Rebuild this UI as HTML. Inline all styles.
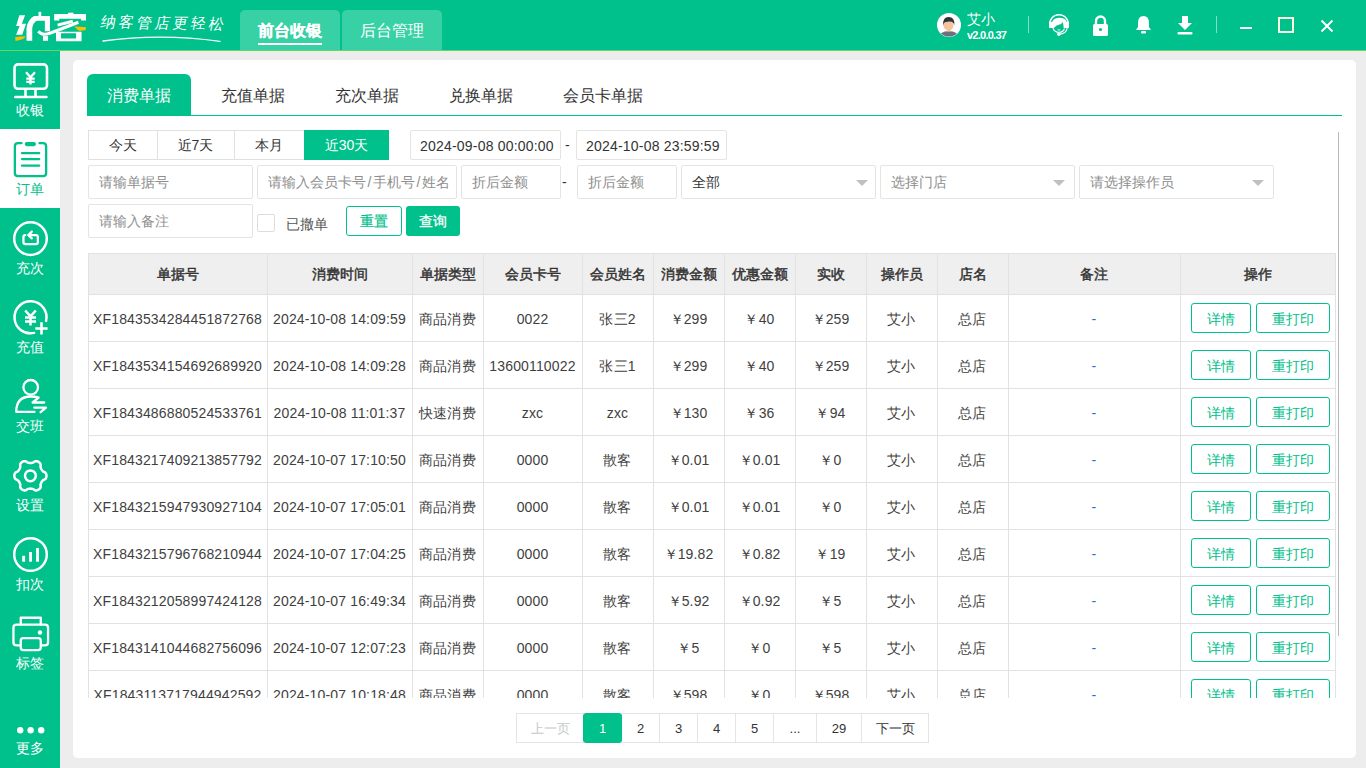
<!DOCTYPE html>
<html><head><meta charset="utf-8"><style>
*{margin:0;padding:0;box-sizing:border-box}
html,body{width:1366px;height:768px;overflow:hidden;background:#ededed;font-family:"Liberation Sans",sans-serif;color:#333}
.a{position:absolute}
.th{position:absolute;text-align:center;font-size:14px;font-weight:500;-webkit-text-stroke:0.45px #333;color:#333;white-space:nowrap}
.td{position:absolute;text-align:center;font-size:14px;color:#3f3f3f;white-space:nowrap;height:47px;letter-spacing:0.15px}
.rm{color:#1a73d9}
.hl{position:absolute;height:1px;background:#e2e2e2}
.vl{position:absolute;width:1px;background:#e2e2e2}
.obtn{position:absolute;height:30px;border:1px solid #00c08b;border-radius:3px;color:#00c08b;font-size:14px;text-align:center;line-height:30px;background:#fff}
.sbt{position:absolute;left:0;width:60px;text-align:center;font-size:14px;line-height:16px}
.inp{position:absolute;height:34px;border:1px solid #e4e4e4;border-radius:2px;font-size:14px;color:#8e8e8e;line-height:32px;padding-left:10px;background:#fff;white-space:nowrap}
.tri{position:absolute;width:0;height:0;border-left:6px solid transparent;border-right:6px solid transparent;border-top:6px solid #c0c0c0}
.pg{position:absolute;top:713px;height:30px;border:1px solid #e4e4e4;font-size:13px;text-align:center;line-height:29px;color:#333;background:#fff}
</style></head><body>
<!-- header -->
<div class="a" style="left:0;top:0;width:1366px;height:50px;background:#00c08b"></div>
<div class="a" style="left:0;top:50px;width:1366px;height:1px;background:#62d862"></div>
<svg class="a" style="left:10px;top:8px" width="85" height="38" viewBox="0 0 1366 611">
<path d="M150 115H242L190 252H258L196 432H98L154 288H98Z" fill="#fff"/>
<path d="M385 128H642V372H560V205H430Q368 235 357 330V528H265V330Q280 190 385 128Z" fill="#fff"/>
<rect x="458" y="62" width="44" height="70" fill="#fff"/>
<rect x="530" y="452" width="82" height="75" fill="#fff"/>
<path d="M710 98H1222V202H1140V172H792V202H710Z" fill="#fff"/>
<rect x="935" y="75" width="85" height="30" fill="#fff"/>
<path d="M765 275L1010 212" stroke="#fff" stroke-width="48" fill="none"/>
<path d="M1100 228Q840 330 640 405Q520 450 455 372" stroke="#fff" stroke-width="50" fill="none"/>
<path d="M740 380H1150V535H740ZM820 405V490H1062V405Z" fill="#fff" fill-rule="evenodd"/>
<path d="M82 470Q160 455 245 455Q240 492 200 502Q140 520 88 532Z" fill="#fbbf00"/>
<path d="M1030 296Q1120 300 1222 310L1216 352Q1150 372 1100 362Z" fill="#fbbf00"/>
</svg>
<div class="a" style="left:101px;top:13px;font-size:15px;color:#fff;letter-spacing:3px;line-height:20px;font-weight:200;transform:skewX(-10deg) rotate(1deg);white-space:nowrap">纳客管店更轻松</div>
<svg class="a" style="left:100px;top:33px" width="124" height="10" viewBox="0 0 124 10"><path d="M3 8Q60 0 120 8.3" stroke="#fff" stroke-width="1.3" fill="none" stroke-linecap="round"/></svg>
<div class="a" style="left:240px;top:10px;width:100px;height:40px;background:#37d1a5;border-radius:5px 5px 0 0"></div>
<div class="a" style="left:342px;top:10px;width:100px;height:40px;background:#37d1a5;border-radius:5px 5px 0 0"></div>
<div class="a" style="left:240px;top:20px;width:100px;text-align:center;font-size:16px;font-weight:bold;color:#fff;line-height:22px;-webkit-text-stroke:0.3px #fff">前台收银</div>
<div class="a" style="left:258px;top:43px;width:64px;height:2px;background:#fff"></div>
<div class="a" style="left:342px;top:20px;width:100px;text-align:center;font-size:16px;color:#fff;line-height:22px">后台管理</div>
<!-- user -->
<svg class="a" style="left:937px;top:13px" width="24" height="24" viewBox="0 0 24 24"><circle cx="12" cy="12" r="12" fill="#fff"/><clipPath id="cc"><circle cx="12" cy="12" r="11.5"/></clipPath><g clip-path="url(#cc)"><path d="M2 24Q3 18.4 11.8 18.1Q20.6 18.4 21.6 24Z" fill="#6d7080"/><rect x="9.9" y="15" width="3.9" height="3.6" fill="#f4c59c"/><ellipse cx="11.5" cy="12.7" rx="5" ry="4.7" fill="#f4c59c"/><path d="M6.1 12.8Q5.4 4 11.6 4Q17.9 4 17.3 12.2Q16.8 9.2 14.5 8.7Q11 8.3 8 9.3Q6.6 10.2 6.1 12.8Z" fill="#333"/></g></svg>
<div class="a" style="left:967px;top:11px;font-size:14px;color:#fff;line-height:16px">艾小</div>
<div class="a" style="left:967px;top:29px;font-size:11px;font-weight:bold;color:#fff;line-height:13px;letter-spacing:-0.75px">v2.0.0.37</div>
<div class="a" style="left:1028px;top:16px;width:1px;height:17px;background:rgba(255,255,255,0.5)"></div>
<svg class="a" style="left:1044px;top:10px" width="30" height="30" viewBox="0 0 30 30"><path d="M5.9 16A9.3 9.3 0 1 1 24.1 16" stroke="#fff" stroke-width="1.5" fill="none"/><rect x="5" y="11.7" width="4.6" height="6.4" rx="1.2" fill="#fff"/><rect x="21" y="11.7" width="4" height="6.4" rx="1.2" fill="#fff"/><path d="M7.8 18V15Q7.8 7.8 15.5 7.8Q23.2 7.8 23.2 15V18Z" fill="#fff"/><path d="M10 17.8Q12.5 14.6 17.3 13.9Q17.9 12 18.6 12.2Q19.6 14 19.6 17V18.5Q19 21.3 15 21.3Q11 21.3 10 17.8Z" fill="#00c08b"/><path d="M9 18.2Q10.5 22.3 15 22.3Q19.3 22.3 20.5 18.5" stroke="#fff" stroke-width="1.1" fill="none"/><path d="M13.6 19.8Q15 20.4 16.4 19.8" stroke="#fff" stroke-width="0.9" fill="none"/><path d="M23.2 18Q22.5 23.4 15.5 24.3" stroke="#fff" stroke-width="1.2" fill="none"/><circle cx="14.8" cy="24.3" r="1.7" fill="#fff"/></svg>
<svg class="a" style="left:1092px;top:15px" width="17" height="21" viewBox="0 0 17 21"><path d="M4 9V6A4.5 4.5 0 0 1 13 6V9" stroke="#fff" stroke-width="2.4" fill="none"/><rect x="1" y="9" width="15" height="12" rx="1.5" fill="#fff"/><circle cx="8.5" cy="14.5" r="1.6" fill="#00c08b"/></svg>
<svg class="a" style="left:1135px;top:15px" width="17" height="19" viewBox="0 0 17 19"><path d="M8.5 1Q3 1 3 8V12L1 15H16L14 12V8Q14 1 8.5 1Z" fill="#fff"/><rect x="6" y="16" width="5" height="2.5" rx="1" fill="#fff"/></svg>
<svg class="a" style="left:1177px;top:15px" width="16" height="20" viewBox="0 0 16 20"><path d="M5 1H11V8H15L8 15L1 8H5Z" fill="#fff"/><rect x="0.5" y="17" width="15" height="2.5" rx="1" fill="#fff"/></svg>
<div class="a" style="left:1216px;top:16px;width:1px;height:17px;background:rgba(255,255,255,0.5)"></div>
<div class="a" style="left:1240px;top:27px;width:12px;height:2px;background:#fff"></div>
<div class="a" style="left:1278px;top:17px;width:16px;height:16px;border:2px solid #fffbe0"></div>
<svg class="a" style="left:1320px;top:19px" width="14" height="14" viewBox="0 0 14 14"><path d="M1.5 1.5L12.5 12.5M12.5 1.5L1.5 12.5" stroke="#fff" stroke-width="2"/></svg>
<!-- sidebar -->
<div class="a" style="left:0;top:51px;width:60px;height:717px;background:#00c08b"></div>
<div style="position:absolute;left:0;top:50px;width:60px;height:79px"><svg style="display:block" width="60" height="79" viewBox="0 0 60 79"><rect x="14.5" y="14.4" width="32.5" height="24.4" rx="3.5" stroke="#fff" stroke-width="2.6" fill="none" stroke-linecap="round" stroke-linejoin="round"/><path d="M15.2 47H46.5" stroke="#fff" stroke-width="2.4" fill="none" stroke-linecap="round" stroke-linejoin="round"/><path d="M25.5 39.5V46M35.5 39.5V46" stroke="#fff" stroke-width="2.6" fill="none"/><path d="M26 22.3L30.5 27.3L35 22.3M30.5 27.3V34.6M26.3 28.6H34.7M26.3 31.9H34.7" stroke="#fff" stroke-width="2.3" fill="none"/></svg></div>
<div class="sbt" style="top:102px;color:#fff">收银</div>
<div style="position:absolute;left:0;top:129px;width:60px;height:79px;background:#fff"></div>
<div style="position:absolute;left:0;top:129px;width:60px;height:79px"><svg style="display:block" width="60" height="79" viewBox="0 0 60 79"><path d="M21.5 14.2H18Q14.85 14.2 14.85 17.5V44Q14.85 47.15 18 47.15H43Q46.15 47.15 46.15 44V17.5Q46.15 14.2 43 14.2H39.5" stroke="#00c08b" stroke-width="2.3" fill="none" stroke-linecap="round" stroke-linejoin="round"/><rect x="24.7" y="13" width="11.3" height="4.2" rx="2.1" fill="#00c08b"/><path d="M22 24.2H39.2M22 30.1H39.2M22 36.7H39.2" stroke="#00c08b" stroke-width="2.3" fill="none" stroke-linecap="round" stroke-linejoin="round"/></svg></div>
<div class="sbt" style="top:181px;color:#00c08b">订单</div>
<div style="position:absolute;left:0;top:208px;width:60px;height:79px"><svg style="display:block" width="60" height="79" viewBox="0 0 60 79"><circle cx="30.5" cy="30.6" r="16.3" stroke="#fff" stroke-width="2.5" fill="none" stroke-linecap="round" stroke-linejoin="round"/><path d="M28.5 27.05H35.85Q37.85 27.05 37.85 29V34Q37.85 36.05 35.85 36.05H25.45Q23.45 36.05 23.45 34V29Q23.45 27.05 25.2 27.05" stroke="#fff" stroke-width="2.3" fill="none" stroke-linecap="round" stroke-linejoin="round"/><path d="M31.8 23.6L28.4 27.1L31.8 30.4" stroke="#fff" stroke-width="2.3" fill="none" stroke-linecap="round" stroke-linejoin="round"/></svg></div>
<div class="sbt" style="top:260px;color:#fff">充次</div>
<div style="position:absolute;left:0;top:287px;width:60px;height:79px"><svg style="display:block" width="60" height="79" viewBox="0 0 60 79"><path d="M46.1 33.9A16 16 0 1 0 34.1 45.9" stroke="#fff" stroke-width="2.5" fill="none" stroke-linecap="round" stroke-linejoin="round"/><path d="M25.2 23.5L30.5 29.3L35.8 23.5M30.5 29.3V38.6M25 30.6H36M25 34.6H36" stroke="#fff" stroke-width="2.5" fill="none"/><path d="M41.5 35.3V47.6M35.3 41.5H47.6" stroke="#fff" stroke-width="2.6" fill="none"/></svg></div>
<div class="sbt" style="top:339px;color:#fff">充值</div>
<div style="position:absolute;left:0;top:366px;width:60px;height:79px"><svg style="display:block" width="60" height="79" viewBox="0 0 60 79"><circle cx="30.7" cy="21.3" r="7.3" stroke="#fff" stroke-width="2.3" fill="none" stroke-linecap="round" stroke-linejoin="round"/><path d="M34.5 45.8H16.2Q16.5 30.5 30.5 30.5Q36 30.5 38.6 31.6L32.6 36.5H44.2M34.3 41.6H46L40.6 46.2" stroke="#fff" stroke-width="2.3" fill="none" stroke-linecap="round" stroke-linejoin="round"/></svg></div>
<div class="sbt" style="top:418px;color:#fff">交班</div>
<div style="position:absolute;left:0;top:445px;width:60px;height:79px"><svg style="display:block" width="60" height="79" viewBox="0 0 60 79"><path d="M46.50 30.80 L46.43 31.64 L46.23 32.46 L45.89 33.25 L45.38 33.98 L44.36 34.54 L43.32 35.00 L42.74 35.54 L42.26 36.08 L41.84 36.63 L41.49 37.20 L41.17 37.80 L40.90 38.43 L40.67 39.12 L40.50 39.89 L40.62 41.02 L40.65 42.18 L40.27 42.99 L39.76 43.68 L39.14 44.26 L38.45 44.74 L37.69 45.11 L36.87 45.34 L36.02 45.44 L35.13 45.37 L34.14 44.76 L33.22 44.09 L32.47 43.86 L31.76 43.71 L31.07 43.63 L30.40 43.60 L29.73 43.63 L29.04 43.71 L28.33 43.86 L27.58 44.09 L26.66 44.76 L25.67 45.37 L24.78 45.44 L23.93 45.34 L23.11 45.11 L22.35 44.74 L21.66 44.26 L21.04 43.68 L20.53 42.99 L20.15 42.18 L20.18 41.02 L20.30 39.89 L20.13 39.12 L19.90 38.43 L19.63 37.80 L19.31 37.20 L18.96 36.63 L18.54 36.08 L18.06 35.54 L17.48 35.00 L16.44 34.54 L15.42 33.98 L14.91 33.25 L14.57 32.46 L14.37 31.64 L14.30 30.80 L14.37 29.96 L14.57 29.14 L14.91 28.35 L15.42 27.62 L16.44 27.06 L17.48 26.60 L18.06 26.06 L18.54 25.52 L18.96 24.97 L19.31 24.40 L19.63 23.80 L19.90 23.17 L20.13 22.48 L20.30 21.71 L20.18 20.58 L20.15 19.42 L20.53 18.61 L21.04 17.92 L21.66 17.34 L22.35 16.86 L23.11 16.49 L23.93 16.26 L24.78 16.16 L25.67 16.23 L26.66 16.84 L27.58 17.51 L28.33 17.74 L29.04 17.89 L29.73 17.97 L30.40 18.00 L31.07 17.97 L31.76 17.89 L32.47 17.74 L33.22 17.51 L34.14 16.84 L35.13 16.23 L36.02 16.16 L36.87 16.26 L37.69 16.49 L38.45 16.86 L39.14 17.34 L39.76 17.92 L40.27 18.61 L40.65 19.42 L40.62 20.58 L40.50 21.71 L40.67 22.48 L40.90 23.17 L41.17 23.80 L41.49 24.40 L41.84 24.97 L42.26 25.52 L42.74 26.06 L43.32 26.60 L44.36 27.06 L45.38 27.62 L45.89 28.35 L46.23 29.14 L46.43 29.96Z" stroke="#fff" stroke-width="2.5" fill="none" stroke-linecap="round" stroke-linejoin="round"/><circle cx="30.4" cy="30.8" r="5.4" stroke="#fff" stroke-width="2.5" fill="none" stroke-linecap="round" stroke-linejoin="round"/></svg></div>
<div class="sbt" style="top:497px;color:#fff">设置</div>
<div style="position:absolute;left:0;top:524px;width:60px;height:79px"><svg style="display:block" width="60" height="79" viewBox="0 0 60 79"><circle cx="30.5" cy="30.5" r="16.3" stroke="#fff" stroke-width="2.5" fill="none" stroke-linecap="round" stroke-linejoin="round"/><rect x="22.2" y="31.8" width="2.9" height="5.9" fill="#fff"/><rect x="29.1" y="28" width="2.9" height="9.7" fill="#fff"/><rect x="36.1" y="24" width="2.9" height="13.7" fill="#fff"/></svg></div>
<div class="sbt" style="top:576px;color:#fff">扣次</div>
<div style="position:absolute;left:0;top:603px;width:60px;height:79px"><svg style="display:block" width="60" height="79" viewBox="0 0 60 79"><path d="M20.75 21.55V14.75H40.75V21.55" stroke="#fff" stroke-width="2.3" fill="none" stroke-linecap="round" stroke-linejoin="round"/><path d="M19.8 42.45H16.5Q13.45 42.45 13.45 39.5V24.5Q13.45 21.55 16.5 21.55H45Q48.05 21.55 48.05 24.5V39.5Q48.05 42.45 45 42.45H41.7" stroke="#fff" stroke-width="2.3" fill="none" stroke-linecap="round" stroke-linejoin="round"/><rect x="20.75" y="35.15" width="20" height="11.9" rx="2.5" stroke="#fff" stroke-width="2.3" fill="none" stroke-linecap="round" stroke-linejoin="round"/><circle cx="40" cy="29.5" r="2.2" fill="#fff"/></svg></div>
<div class="sbt" style="top:655px;color:#fff">标签</div>
<div style="position:absolute;left:17px;top:727px;width:28px;height:7px"><svg style="display:block" width="28" height="7"><circle cx="3.2" cy="3.3" r="3.2" fill="#fff"/><circle cx="13.6" cy="3.3" r="3.2" fill="#fff"/><circle cx="24.2" cy="3.3" r="3.2" fill="#fff"/></svg></div>
<div class="sbt" style="top:740px;color:#fff">更多</div>
<!-- card -->
<div class="a" style="left:73px;top:60px;width:1283px;height:698px;background:#fff;border-radius:5px"></div>
<!-- tabs -->
<div class="a" style="left:87px;top:74px;width:104px;height:41px;background:#00c08b;border-radius:6px 6px 0 0"></div>
<div class="a" style="left:87px;top:115px;width:1255px;height:1px;background:#00c08b"></div>
<div class="a" style="left:87px;top:86px;width:104px;text-align:center;font-size:16px;color:#fff;line-height:20px">消费单据</div>
<div class="a" style="left:221px;top:86px;font-size:16px;color:#333;line-height:20px">充值单据</div>
<div class="a" style="left:335px;top:86px;font-size:16px;color:#333;line-height:20px">充次单据</div>
<div class="a" style="left:449px;top:86px;font-size:16px;color:#333;line-height:20px">兑换单据</div>
<div class="a" style="left:563px;top:86px;font-size:16px;color:#333;line-height:20px">会员卡单据</div>
<!-- scroll border line -->
<div class="a" style="left:1338px;top:132px;width:1px;height:504px;background:#b8b8b8"></div>
<!-- date buttons -->
<div class="a" style="left:88px;top:130px;width:301px;height:30px;border:1px solid #e0e0e0;background:#fff"></div>
<div class="a" style="left:157px;top:130px;width:1px;height:30px;background:#e0e0e0"></div>
<div class="a" style="left:234px;top:130px;width:1px;height:30px;background:#e0e0e0"></div>
<div class="a" style="left:304px;top:130px;width:85px;height:30px;background:#00c08b"></div>
<div class="a" style="left:88px;top:137px;width:69px;text-align:center;font-size:14px;line-height:16px">今天</div>
<div class="a" style="left:157px;top:137px;width:77px;text-align:center;font-size:14px;line-height:16px">近7天</div>
<div class="a" style="left:234px;top:137px;width:70px;text-align:center;font-size:14px;line-height:16px">本月</div>
<div class="a" style="left:304px;top:137px;width:85px;text-align:center;font-size:14px;line-height:16px;color:#fff">近30天</div>
<div class="inp" style="left:410px;top:130px;width:151px;height:30px;line-height:30px;color:#333;padding-left:9px;letter-spacing:0.2px">2024-09-08 00:00:00</div>
<div class="a" style="left:565px;top:137px;font-size:14px;line-height:16px">-</div>
<div class="inp" style="left:576px;top:130px;width:151px;height:30px;line-height:30px;color:#333;padding-left:9px;letter-spacing:0.2px">2024-10-08 23:59:59</div>
<!-- row 1 inputs -->
<div class="inp" style="left:88px;top:165px;width:165px">请输单据号</div>
<div class="inp" style="left:257px;top:165px;width:200px">请输入会员卡号<span style="margin:0 1.5px">/</span>手机号<span style="margin:0 1.5px">/</span>姓名</div>
<div class="inp" style="left:461px;top:165px;width:100px">折后金额</div>
<div class="a" style="left:562px;top:174px;font-size:14px;line-height:16px">-</div>
<div class="inp" style="left:577px;top:165px;width:100px">折后金额</div>
<div class="inp" style="left:681px;top:165px;width:195px;color:#333">全部</div>
<div class="tri" style="left:856px;top:180px"></div>
<div class="inp" style="left:880px;top:165px;width:195px">选择门店</div>
<div class="tri" style="left:1053px;top:180px"></div>
<div class="inp" style="left:1079px;top:165px;width:195px">请选择操作员</div>
<div class="tri" style="left:1252px;top:180px"></div>
<!-- row 2 -->
<div class="inp" style="left:88px;top:204px;width:165px">请输入备注</div>
<div class="a" style="left:257px;top:214px;width:18px;height:18px;border:1px solid #dcdcdc;border-radius:2px;background:#fff"></div>
<div class="a" style="left:286px;top:216px;font-size:14px;line-height:16px;color:#555">已撤单</div>
<div class="a" style="left:346px;top:206px;width:56px;height:30px;border:1px solid #00c08b;border-radius:3px;color:#00c08b;text-align:center;font-size:14px;line-height:28px;-webkit-text-stroke:0.2px #00c08b">重置</div>
<div class="a" style="left:406px;top:206px;width:54px;height:30px;background:#00c08b;border-radius:3px;color:#fff;text-align:center;font-size:14px;line-height:30px;-webkit-text-stroke:0.3px #fff">查询</div>
<!-- table -->
<div class="a" style="left:88px;top:253px;width:1248px;height:445px;overflow:hidden">
<div class="a" style="left:-88px;top:-253px;width:1366px;height:768px">
<div style="position:absolute;left:88px;top:253px;width:1247px;height:41px;background:#efefef"></div>
<div class="th" style="left:88px;top:254px;width:179px;height:41px;line-height:41px">单据号</div>
<div class="th" style="left:267px;top:254px;width:145px;height:41px;line-height:41px">消费时间</div>
<div class="th" style="left:412px;top:254px;width:71px;height:41px;line-height:41px">单据类型</div>
<div class="th" style="left:483px;top:254px;width:99px;height:41px;line-height:41px">会员卡号</div>
<div class="th" style="left:582px;top:254px;width:71px;height:41px;line-height:41px">会员姓名</div>
<div class="th" style="left:653px;top:254px;width:71px;height:41px;line-height:41px">消费金额</div>
<div class="th" style="left:724px;top:254px;width:71px;height:41px;line-height:41px">优惠金额</div>
<div class="th" style="left:795px;top:254px;width:71px;height:41px;line-height:41px">实收</div>
<div class="th" style="left:866px;top:254px;width:71px;height:41px;line-height:41px">操作员</div>
<div class="th" style="left:937px;top:254px;width:71px;height:41px;line-height:41px">店名</div>
<div class="th" style="left:1008px;top:254px;width:172px;height:41px;line-height:41px">备注</div>
<div class="th" style="left:1180px;top:254px;width:155px;height:41px;line-height:41px">操作</div>
<div class="td" style="left:88px;top:296px;width:179px;line-height:47px">XF1843534284451872768</div>
<div class="td" style="left:267px;top:296px;width:145px;line-height:47px">2024-10-08 14:09:59</div>
<div class="td" style="left:412px;top:296px;width:71px;line-height:47px">商品消费</div>
<div class="td" style="left:483px;top:296px;width:99px;line-height:47px">0022</div>
<div class="td" style="left:582px;top:296px;width:71px;line-height:47px">张三2</div>
<div class="td" style="left:653px;top:296px;width:71px;line-height:47px">￥299</div>
<div class="td" style="left:724px;top:296px;width:71px;line-height:47px">￥40</div>
<div class="td" style="left:795px;top:296px;width:71px;line-height:47px">￥259</div>
<div class="td" style="left:866px;top:296px;width:71px;line-height:47px">艾小</div>
<div class="td" style="left:937px;top:296px;width:71px;line-height:47px">总店</div>
<div class="td rm" style="left:1008px;top:296px;width:172px;line-height:47px">-</div>
<div class="obtn" style="left:1191px;top:303px;width:60px">详情</div>
<div class="obtn" style="left:1256px;top:303px;width:74px">重打印</div>
<div class="td" style="left:88px;top:343px;width:179px;line-height:47px">XF1843534154692689920</div>
<div class="td" style="left:267px;top:343px;width:145px;line-height:47px">2024-10-08 14:09:28</div>
<div class="td" style="left:412px;top:343px;width:71px;line-height:47px">商品消费</div>
<div class="td" style="left:483px;top:343px;width:99px;line-height:47px">13600110022</div>
<div class="td" style="left:582px;top:343px;width:71px;line-height:47px">张三1</div>
<div class="td" style="left:653px;top:343px;width:71px;line-height:47px">￥299</div>
<div class="td" style="left:724px;top:343px;width:71px;line-height:47px">￥40</div>
<div class="td" style="left:795px;top:343px;width:71px;line-height:47px">￥259</div>
<div class="td" style="left:866px;top:343px;width:71px;line-height:47px">艾小</div>
<div class="td" style="left:937px;top:343px;width:71px;line-height:47px">总店</div>
<div class="td rm" style="left:1008px;top:343px;width:172px;line-height:47px">-</div>
<div class="obtn" style="left:1191px;top:350px;width:60px">详情</div>
<div class="obtn" style="left:1256px;top:350px;width:74px">重打印</div>
<div class="td" style="left:88px;top:390px;width:179px;line-height:47px">XF1843486880524533761</div>
<div class="td" style="left:267px;top:390px;width:145px;line-height:47px">2024-10-08 11:01:37</div>
<div class="td" style="left:412px;top:390px;width:71px;line-height:47px">快速消费</div>
<div class="td" style="left:483px;top:390px;width:99px;line-height:47px">zxc</div>
<div class="td" style="left:582px;top:390px;width:71px;line-height:47px">zxc</div>
<div class="td" style="left:653px;top:390px;width:71px;line-height:47px">￥130</div>
<div class="td" style="left:724px;top:390px;width:71px;line-height:47px">￥36</div>
<div class="td" style="left:795px;top:390px;width:71px;line-height:47px">￥94</div>
<div class="td" style="left:866px;top:390px;width:71px;line-height:47px">艾小</div>
<div class="td" style="left:937px;top:390px;width:71px;line-height:47px">总店</div>
<div class="td rm" style="left:1008px;top:390px;width:172px;line-height:47px">-</div>
<div class="obtn" style="left:1191px;top:397px;width:60px">详情</div>
<div class="obtn" style="left:1256px;top:397px;width:74px">重打印</div>
<div class="td" style="left:88px;top:437px;width:179px;line-height:47px">XF1843217409213857792</div>
<div class="td" style="left:267px;top:437px;width:145px;line-height:47px">2024-10-07 17:10:50</div>
<div class="td" style="left:412px;top:437px;width:71px;line-height:47px">商品消费</div>
<div class="td" style="left:483px;top:437px;width:99px;line-height:47px">0000</div>
<div class="td" style="left:582px;top:437px;width:71px;line-height:47px">散客</div>
<div class="td" style="left:653px;top:437px;width:71px;line-height:47px">￥0.01</div>
<div class="td" style="left:724px;top:437px;width:71px;line-height:47px">￥0.01</div>
<div class="td" style="left:795px;top:437px;width:71px;line-height:47px">￥0</div>
<div class="td" style="left:866px;top:437px;width:71px;line-height:47px">艾小</div>
<div class="td" style="left:937px;top:437px;width:71px;line-height:47px">总店</div>
<div class="td rm" style="left:1008px;top:437px;width:172px;line-height:47px">-</div>
<div class="obtn" style="left:1191px;top:444px;width:60px">详情</div>
<div class="obtn" style="left:1256px;top:444px;width:74px">重打印</div>
<div class="td" style="left:88px;top:484px;width:179px;line-height:47px">XF1843215947930927104</div>
<div class="td" style="left:267px;top:484px;width:145px;line-height:47px">2024-10-07 17:05:01</div>
<div class="td" style="left:412px;top:484px;width:71px;line-height:47px">商品消费</div>
<div class="td" style="left:483px;top:484px;width:99px;line-height:47px">0000</div>
<div class="td" style="left:582px;top:484px;width:71px;line-height:47px">散客</div>
<div class="td" style="left:653px;top:484px;width:71px;line-height:47px">￥0.01</div>
<div class="td" style="left:724px;top:484px;width:71px;line-height:47px">￥0.01</div>
<div class="td" style="left:795px;top:484px;width:71px;line-height:47px">￥0</div>
<div class="td" style="left:866px;top:484px;width:71px;line-height:47px">艾小</div>
<div class="td" style="left:937px;top:484px;width:71px;line-height:47px">总店</div>
<div class="td rm" style="left:1008px;top:484px;width:172px;line-height:47px">-</div>
<div class="obtn" style="left:1191px;top:491px;width:60px">详情</div>
<div class="obtn" style="left:1256px;top:491px;width:74px">重打印</div>
<div class="td" style="left:88px;top:531px;width:179px;line-height:47px">XF1843215796768210944</div>
<div class="td" style="left:267px;top:531px;width:145px;line-height:47px">2024-10-07 17:04:25</div>
<div class="td" style="left:412px;top:531px;width:71px;line-height:47px">商品消费</div>
<div class="td" style="left:483px;top:531px;width:99px;line-height:47px">0000</div>
<div class="td" style="left:582px;top:531px;width:71px;line-height:47px">散客</div>
<div class="td" style="left:653px;top:531px;width:71px;line-height:47px">￥19.82</div>
<div class="td" style="left:724px;top:531px;width:71px;line-height:47px">￥0.82</div>
<div class="td" style="left:795px;top:531px;width:71px;line-height:47px">￥19</div>
<div class="td" style="left:866px;top:531px;width:71px;line-height:47px">艾小</div>
<div class="td" style="left:937px;top:531px;width:71px;line-height:47px">总店</div>
<div class="td rm" style="left:1008px;top:531px;width:172px;line-height:47px">-</div>
<div class="obtn" style="left:1191px;top:538px;width:60px">详情</div>
<div class="obtn" style="left:1256px;top:538px;width:74px">重打印</div>
<div class="td" style="left:88px;top:578px;width:179px;line-height:47px">XF1843212058997424128</div>
<div class="td" style="left:267px;top:578px;width:145px;line-height:47px">2024-10-07 16:49:34</div>
<div class="td" style="left:412px;top:578px;width:71px;line-height:47px">商品消费</div>
<div class="td" style="left:483px;top:578px;width:99px;line-height:47px">0000</div>
<div class="td" style="left:582px;top:578px;width:71px;line-height:47px">散客</div>
<div class="td" style="left:653px;top:578px;width:71px;line-height:47px">￥5.92</div>
<div class="td" style="left:724px;top:578px;width:71px;line-height:47px">￥0.92</div>
<div class="td" style="left:795px;top:578px;width:71px;line-height:47px">￥5</div>
<div class="td" style="left:866px;top:578px;width:71px;line-height:47px">艾小</div>
<div class="td" style="left:937px;top:578px;width:71px;line-height:47px">总店</div>
<div class="td rm" style="left:1008px;top:578px;width:172px;line-height:47px">-</div>
<div class="obtn" style="left:1191px;top:585px;width:60px">详情</div>
<div class="obtn" style="left:1256px;top:585px;width:74px">重打印</div>
<div class="td" style="left:88px;top:625px;width:179px;line-height:47px">XF1843141044682756096</div>
<div class="td" style="left:267px;top:625px;width:145px;line-height:47px">2024-10-07 12:07:23</div>
<div class="td" style="left:412px;top:625px;width:71px;line-height:47px">商品消费</div>
<div class="td" style="left:483px;top:625px;width:99px;line-height:47px">0000</div>
<div class="td" style="left:582px;top:625px;width:71px;line-height:47px">散客</div>
<div class="td" style="left:653px;top:625px;width:71px;line-height:47px">￥5</div>
<div class="td" style="left:724px;top:625px;width:71px;line-height:47px">￥0</div>
<div class="td" style="left:795px;top:625px;width:71px;line-height:47px">￥5</div>
<div class="td" style="left:866px;top:625px;width:71px;line-height:47px">艾小</div>
<div class="td" style="left:937px;top:625px;width:71px;line-height:47px">总店</div>
<div class="td rm" style="left:1008px;top:625px;width:172px;line-height:47px">-</div>
<div class="obtn" style="left:1191px;top:632px;width:60px">详情</div>
<div class="obtn" style="left:1256px;top:632px;width:74px">重打印</div>
<div class="td" style="left:88px;top:672px;width:179px;line-height:47px">XF1843113717944942592</div>
<div class="td" style="left:267px;top:672px;width:145px;line-height:47px">2024-10-07 10:18:48</div>
<div class="td" style="left:412px;top:672px;width:71px;line-height:47px">商品消费</div>
<div class="td" style="left:483px;top:672px;width:99px;line-height:47px">0000</div>
<div class="td" style="left:582px;top:672px;width:71px;line-height:47px">散客</div>
<div class="td" style="left:653px;top:672px;width:71px;line-height:47px">￥598</div>
<div class="td" style="left:724px;top:672px;width:71px;line-height:47px">￥0</div>
<div class="td" style="left:795px;top:672px;width:71px;line-height:47px">￥598</div>
<div class="td" style="left:866px;top:672px;width:71px;line-height:47px">艾小</div>
<div class="td" style="left:937px;top:672px;width:71px;line-height:47px">总店</div>
<div class="td rm" style="left:1008px;top:672px;width:172px;line-height:47px">-</div>
<div class="obtn" style="left:1191px;top:679px;width:60px">详情</div>
<div class="obtn" style="left:1256px;top:679px;width:74px">重打印</div>
<div class="hl" style="left:88px;top:294px;width:1247px"></div>
<div class="hl" style="left:88px;top:341px;width:1247px"></div>
<div class="hl" style="left:88px;top:388px;width:1247px"></div>
<div class="hl" style="left:88px;top:435px;width:1247px"></div>
<div class="hl" style="left:88px;top:482px;width:1247px"></div>
<div class="hl" style="left:88px;top:529px;width:1247px"></div>
<div class="hl" style="left:88px;top:576px;width:1247px"></div>
<div class="hl" style="left:88px;top:623px;width:1247px"></div>
<div class="hl" style="left:88px;top:670px;width:1247px"></div>
<div class="hl" style="left:88px;top:717px;width:1247px"></div>
<div class="hl" style="left:88px;top:253px;width:1247px"></div>
<div class="vl" style="left:88px;top:253px;height:800px"></div>
<div class="vl" style="left:267px;top:253px;height:800px"></div>
<div class="vl" style="left:412px;top:253px;height:800px"></div>
<div class="vl" style="left:483px;top:253px;height:800px"></div>
<div class="vl" style="left:582px;top:253px;height:800px"></div>
<div class="vl" style="left:653px;top:253px;height:800px"></div>
<div class="vl" style="left:724px;top:253px;height:800px"></div>
<div class="vl" style="left:795px;top:253px;height:800px"></div>
<div class="vl" style="left:866px;top:253px;height:800px"></div>
<div class="vl" style="left:937px;top:253px;height:800px"></div>
<div class="vl" style="left:1008px;top:253px;height:800px"></div>
<div class="vl" style="left:1180px;top:253px;height:800px"></div>
<div class="vl" style="left:1335px;top:253px;height:800px"></div>
</div></div>
<!-- pagination -->
<div class="pg" style="left:516px;width:68px;color:#c8c8c8">上一页</div>
<div class="pg" style="left:583px;width:39px;background:#00c08b;border-color:#00c08b;color:#fff;border-radius:3px;z-index:2">1</div>
<div class="pg" style="left:621px;width:39px">2</div>
<div class="pg" style="left:659px;width:39px">3</div>
<div class="pg" style="left:697px;width:39px">4</div>
<div class="pg" style="left:735px;width:39px">5</div>
<div class="pg" style="left:773px;width:44px">...</div>
<div class="pg" style="left:816px;width:46px">29</div>
<div class="pg" style="left:861px;width:68px">下一页</div>
</body></html>
